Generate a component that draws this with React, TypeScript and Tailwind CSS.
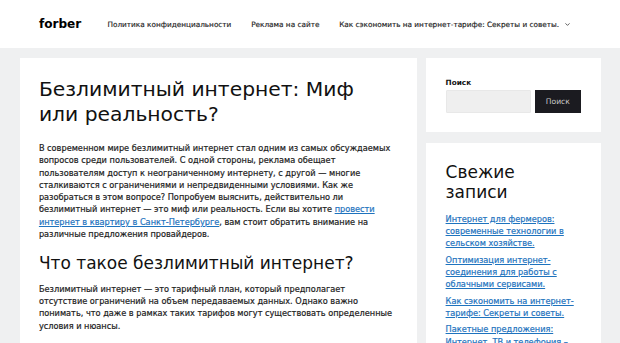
import { ChevronDown } from 'lucide-react';

const navLinks = [
  'Политика конфиденциальности',
  'Реклама на сайте',
];

const recentPosts = [
  'Интернет для фермеров: современные технологии в сельском хозяйстве.',
  'Оптимизация интернет-соединения для работы с облачными сервисами.',
  'Как сэкономить на интернет-тарифе: Секреты и советы.',
  'Пакетные предложения: Интернет, ТВ и телефония – что выбрать?',
  'Интернет в загородном доме: как выбрать провайдера.',
];

export default function App() {
  return (
    <div className="min-h-screen bg-[#eff0f1] font-['DejaVu_Sans',sans-serif] text-[#1c1c1c]">
      {/* Header */}
      <header className="bg-white">
        <div className="mx-auto flex h-[48.4px] max-w-[581px] items-center justify-between px-[19.4px]">
          <div className="text-[12.1px] font-bold leading-[29px] text-black">forber</div>
          <nav className="flex items-center text-[7.3px] leading-[29px] text-[#222] [-webkit-text-stroke:0.15px]">
            {navLinks.map((link) => (
              <a key={link} href="#" className="px-[9.9px]">
                {link}
              </a>
            ))}
            <a href="#" className="flex items-center pl-[9.9px]">
              Как сэкономить на интернет-тарифе: Секреты и советы.
              <span className="pl-[5px] pr-[10px]">
                <ChevronDown className="h-[7px] w-[7px]" strokeWidth={2.5} />
              </span>
            </a>
          </nav>
        </div>
      </header>

      {/* Content */}
      <div className="mx-auto flex max-w-[581px] items-start gap-[9.7px] pt-[9.7px]">
        <main className="w-[397px] shrink-0 bg-white p-[19.4px]">
          <h1 className="text-[20.3px] font-normal leading-[24.4px] text-[#111]">
            Безлимитный интернет: Миф или реальность?
          </h1>
          <div className="mt-[15.7px] text-[8.2px] leading-[12.3px] [-webkit-text-stroke:0.2px]">
            <p className="mb-[12.3px]">
              В современном мире безлимитный интернет стал одним из самых обсуждаемых вопросов среди
              пользователей. С одной стороны, реклама обещает пользователям доступ к неограниченному
              интернету, с другой — многие сталкиваются с ограничениями и непредвиденными условиями.
              Как же разобраться в этом вопросе? Попробуем выяснить, действительно ли безлимитный
              интернет — это миф или реальность. Если вы хотите{' '}
              <a href="#" className="text-[#1e73be] underline">
                провести интернет в квартиру в Санкт-Петербурге
              </a>
              , вам стоит обратить внимание на различные предложения провайдеров.
            </p>
            <h2 className="mb-[9.7px] text-[17px] font-normal leading-[20.4px] text-[#111] [-webkit-text-stroke:0px]">
              Что такое безлимитный интернет?
            </h2>
            <p className="mb-[12.3px]">
              Безлимитный интернет — это тарифный план, который предполагает
              <br />
              отсутствие ограничений на объем передаваемых данных. Однако важно
              <br />
              понимать, что даже в рамках таких тарифов могут существовать определенные
              <br />
              условия и нюансы.
            </p>
            <p>
              Многие провайдеры вводят так называемую политику честного использования, которая
              ограничивает скорость после превышения определенного объема трафика.
            </p>
          </div>
        </main>

        {/* Sidebar */}
        <aside className="flex min-w-0 flex-1 flex-col gap-[10.5px]">
          <div className="bg-white p-[19.4px]">
            <label className="block text-[7.3px] font-bold leading-[12.3px] text-[#111]">Поиск</label>
            <div className="flex gap-[4px]">
              <input
                type="text"
                className="h-[23px] w-[85px] rounded-[1px] border border-[#e8e8e8] bg-[#efefef] outline-none"
              />
              <button className="h-[23px] w-[48px] bg-[#1b1b20] text-[7.6px] text-[#c8c8c8]">
                Поиск
              </button>
            </div>
          </div>

          <div className="bg-white p-[19.4px]">
            <h2 className="mb-[9.7px] text-[17px] font-normal leading-[20.4px] text-[#111]">
              Свежие записи
            </h2>
            <ul className="text-[8.2px] leading-[12.3px] [-webkit-text-stroke:0.2px]">
              {recentPosts.map((post) => (
                <li key={post} className="mb-[4.1px]">
                  <a href="#" className="text-[#1e73be] underline">
                    {post}
                  </a>
                </li>
              ))}
            </ul>
          </div>
        </aside>
      </div>
    </div>
  );
}
